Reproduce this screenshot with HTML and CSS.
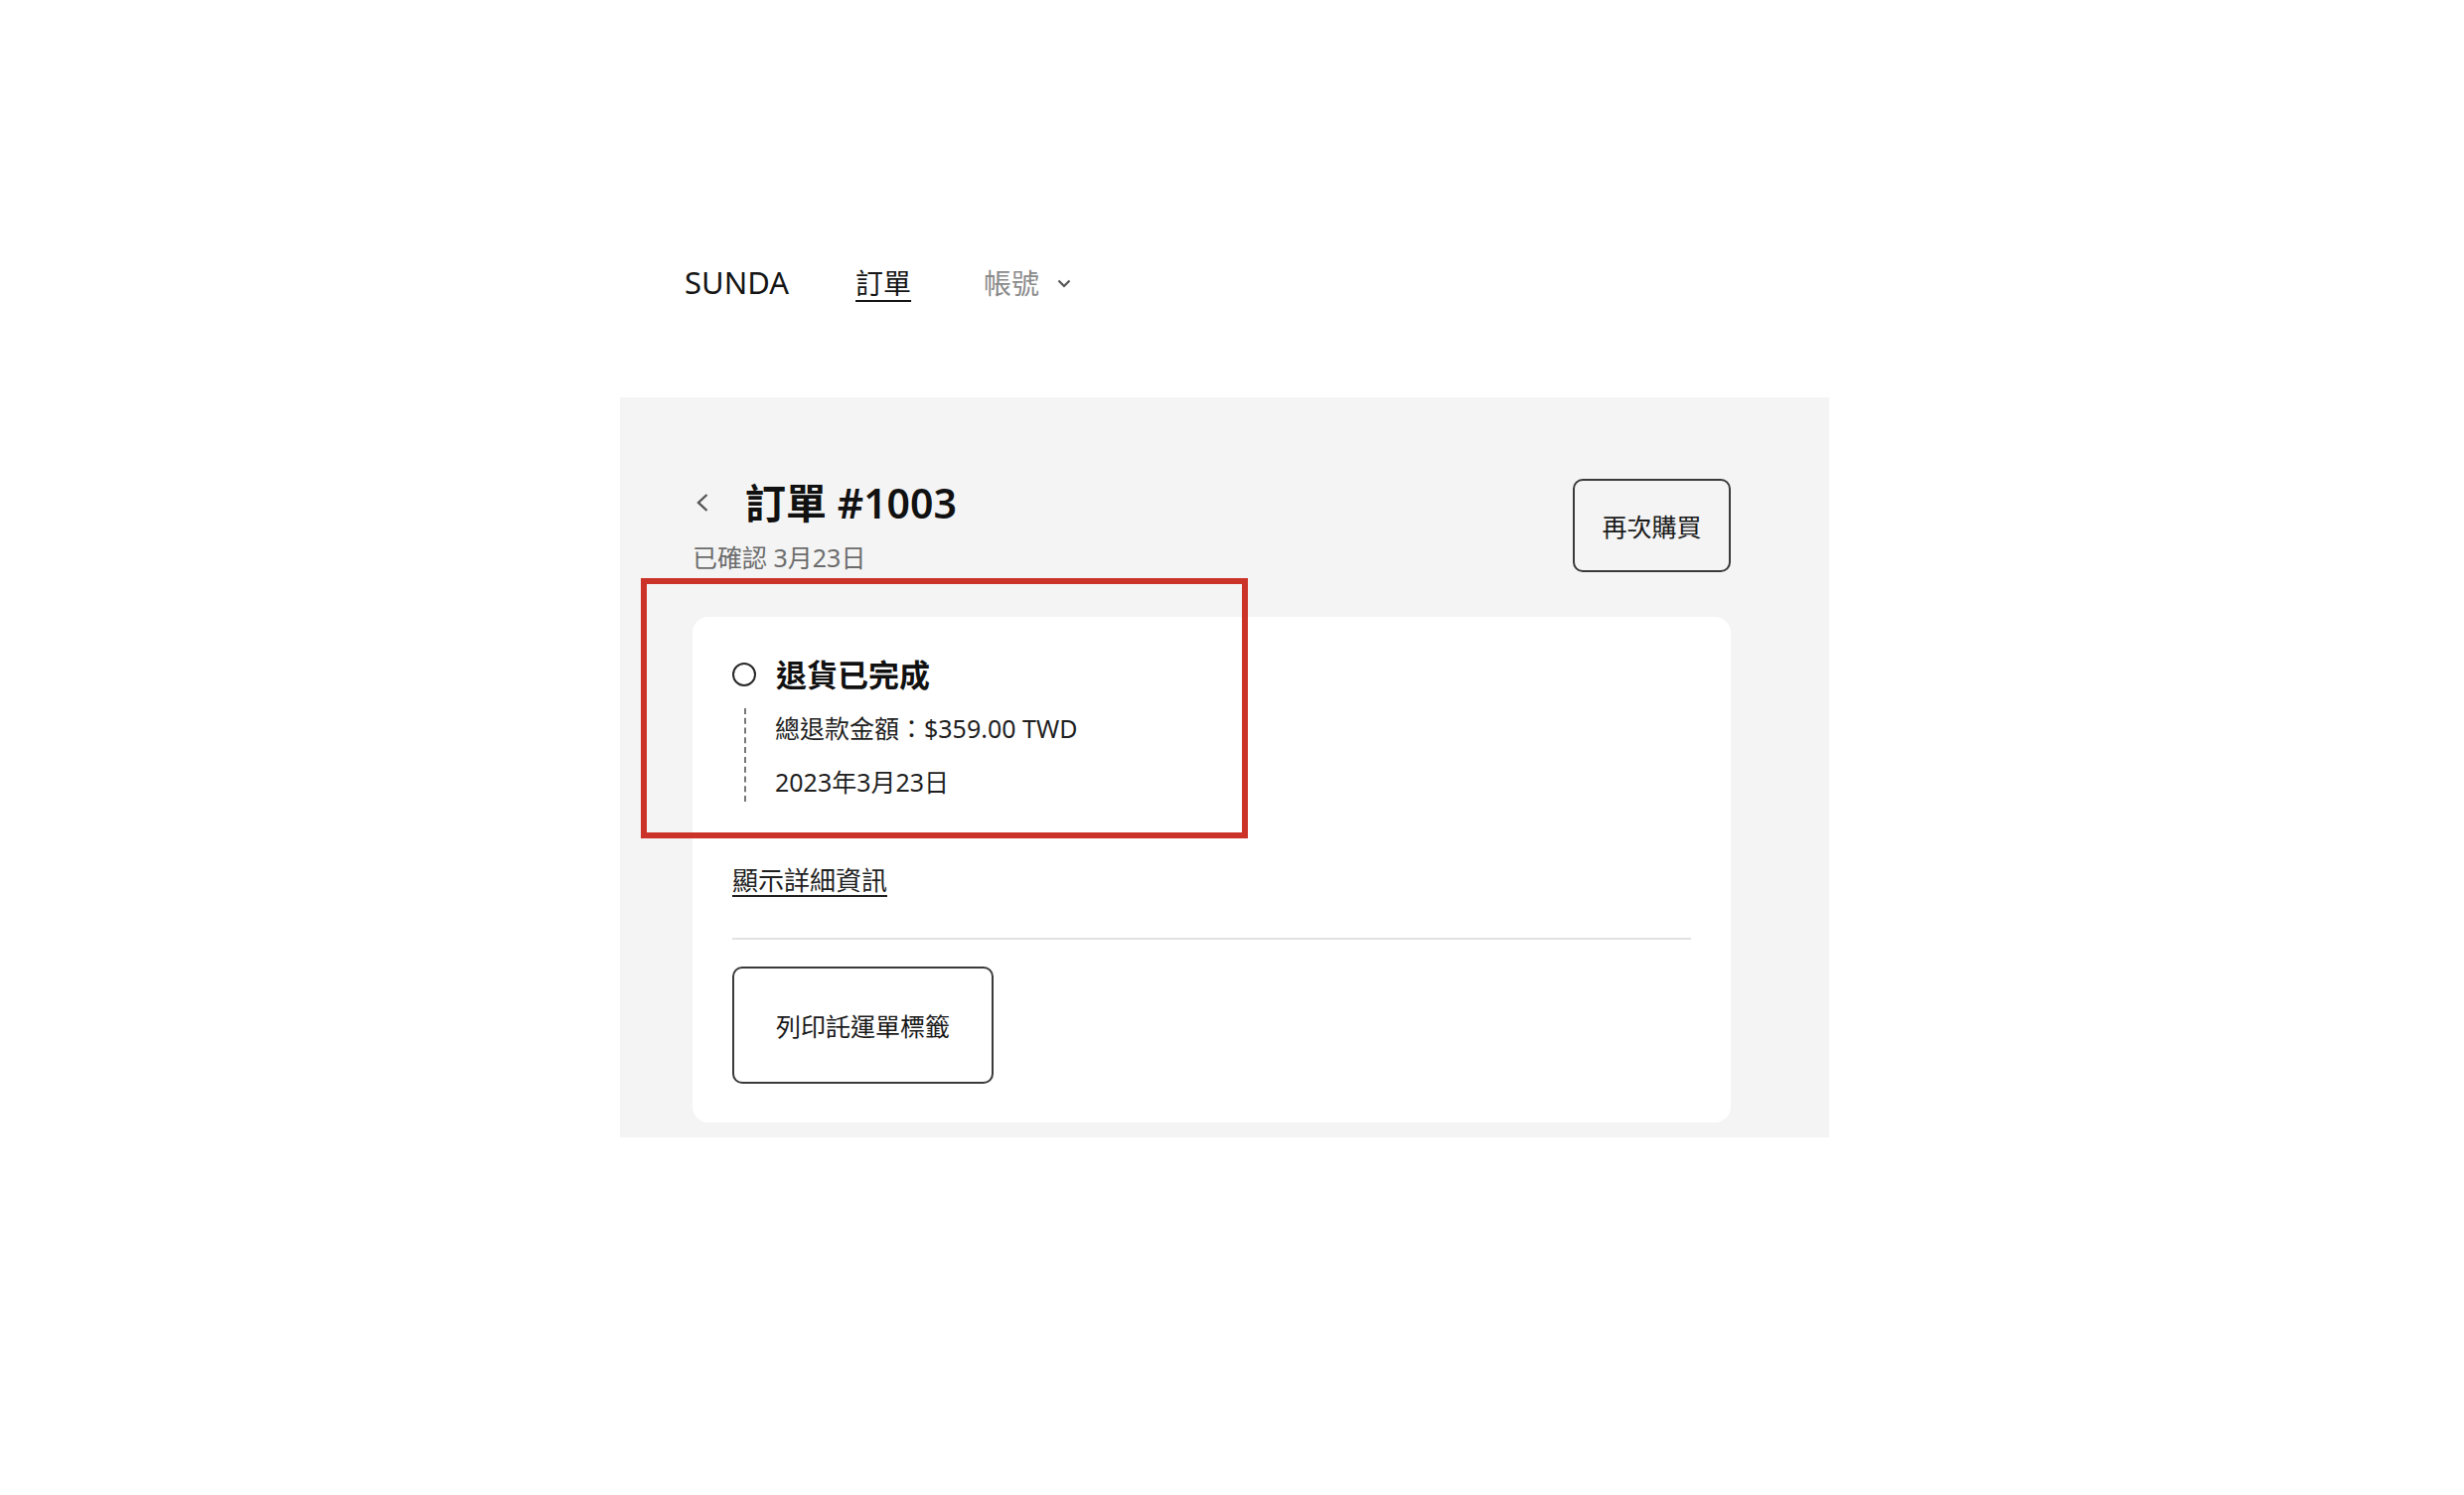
FILE: index.html
```html
<!DOCTYPE html>
<html lang="zh-Hant">
<head>
<meta charset="utf-8">
<title>訂單 #1003</title>
<link rel="stylesheet" href="styles.css">
</head>
<body>
<header class="nav">
  <span class="brand">SUNDA</span>
  <a class="nav-link active" href="#">訂單</a>
  <span class="nav-link account">帳號
    <svg class="nav-chev" width="14" height="9" viewBox="0 0 14 9"><path d="M1.5 1.5 L7 7 L12.5 1.5" fill="none" stroke="#555" stroke-width="2.2"/></svg>
  </span>
</header>

<main class="panel">
  <div class="head">
    <div class="head-left">
      <div class="title-row">
        <svg class="back" width="14" height="20" viewBox="0 0 14 20"><path d="M11.5 2 L3 10 L11.5 18" fill="none" stroke="#555" stroke-width="2.4"/></svg>
        <h1 class="title">訂單 #1003</h1>
      </div>
      <p class="subtitle">已確認 3月23日</p>
    </div>
    <button class="btn btn-again">再次購買</button>
  </div>

  <section class="card">
    <div class="status">
      <span class="dot"></span>
      <h2 class="status-title">退貨已完成</h2>
    </div>
    <div class="details">
      <p class="detail">總退款金額：$359.00 TWD</p>
      <p class="detail">2023年3月23日</p>
    </div>
    <a class="more" href="#">顯示詳細資訊</a>
    <hr class="divider">
    <button class="btn btn-print">列印託運單標籤</button>
  </section>

  <div class="highlight"></div>
</main>
</body>
</html>
```
FILE: styles.css
```css
* { box-sizing: border-box; }
body {
  margin: 0;
  background: #fff;
  font-family: "Noto Sans", "Noto Sans CJK TC", sans-serif;
  color: #1a1a1a;
}
.nav {
  display: flex;
  align-items: center;
  height: 40px;
  margin: 264px 0 0 689px;
}
.brand {
  font-size: 31px;
  color: #151515;
  margin-right: 67px;
}
.nav-link {
  font-size: 28px;
  color: #151515;
  text-decoration: none;
}
.nav-link.active {
  text-decoration: underline;
  text-underline-offset: 6px;
  text-decoration-thickness: 2px;
  margin-right: 73px;
}
.nav-link.account {
  color: #8a8a8a;
  display: flex;
  align-items: center;
  gap: 18px;
}
.nav-chev { display: block; margin-top: 2px; }

.panel {
  position: relative;
  margin: 96px 0 0 624px;
  width: 1217px;
  background: #f4f4f4;
  padding: 80px 99px 15px 73px;
}
.head {
  display: flex;
  justify-content: space-between;
  align-items: flex-start;
}
.title-row {
  display: flex;
  align-items: center;
  height: 52px;
}
.back { display: block; margin: 0 36px 0 3px; }
.title {
  margin: 0;
  font-size: 41px;
  font-weight: 600;
  line-height: 52px;
  color: #111;
}
.subtitle {
  margin: 12px 0 0;
  font-size: 25px;
  line-height: 34px;
  color: #6d6d6d;
}
.btn {
  font-family: inherit;
  background: transparent;
  border: 2px solid #3a3a3a;
  border-radius: 10px;
  color: #1a1a1a;
  cursor: pointer;
}
.btn-again {
  margin-top: 2px;
  width: 159px;
  height: 94px;
  font-size: 25px;
}
.card {
  margin-top: 43px;
  background: #fff;
  border-radius: 16px;
  padding: 40px 40px 39px 40px;
}
.status {
  display: flex;
  align-items: center;
  height: 36px;
}
.dot {
  flex: none;
  width: 24px;
  height: 24px;
  border: 2.5px solid #2a2a2a;
  border-radius: 50%;
  margin-right: 20px;
}
.status-title {
  margin: 0;
  font-size: 31px;
  font-weight: 600;
  line-height: 36px;
  color: #111;
}
.details {
  margin: 16px 0 0 12px;
  padding-left: 29px;
  border-left: 2px dashed #777;
}
.detail {
  margin: 0;
  font-size: 25px;
  line-height: 40px;
  color: #1f1f1f;
}
.detail + .detail { margin-top: 14px; }
.more {
  display: block;
  width: max-content;
  margin-top: 64px;
  font-size: 26px;
  line-height: 30px;
  color: #1f1f1f;
  text-underline-offset: 5px;
}
.divider {
  margin: 43px 0 0;
  border: 0;
  height: 2px;
  background: #e2e2e2;
}
.btn-print {
  display: block;
  margin-top: 27px;
  width: 263px;
  height: 118px;
  font-size: 25px;
}
.highlight {
  position: absolute;
  left: 21px;
  top: 182px;
  width: 611px;
  height: 262px;
  border: 6px solid #cc3328;
  pointer-events: none;
}
```
